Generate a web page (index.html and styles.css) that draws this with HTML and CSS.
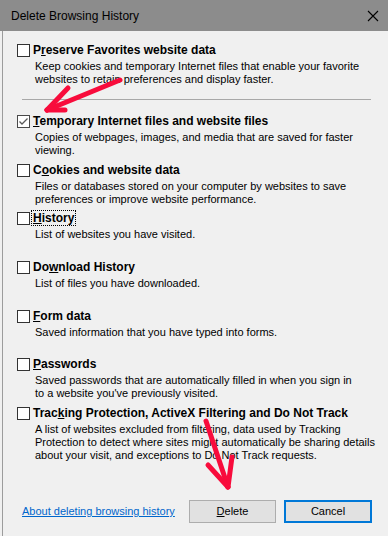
FILE: index.html
```html
<!DOCTYPE html>
<html>
<head>
<meta charset="utf-8">
<title>Delete Browsing History</title>
<link rel="stylesheet" href="styles.css">
</head>
<body>
<div class="dialog">
  <div class="titlebar">
    <span class="title">Delete Browsing History</span>
    <svg class="close" width="12" height="12" viewBox="0 0 12 12"><path d="M1 1L11 11M11 1L1 11" stroke="#000" stroke-width="1.1" fill="none"/></svg>
  </div>
  <div class="body">
    <div class="item">
      <span class="box"></span>
      <div class="label">P<u>r</u>eserve Favorites website data</div>
      <div class="desc">Keep cookies and temporary Internet files that enable your favorite<br>websites to retain preferences and display faster.</div>
    </div>
    <div class="sep"></div>
    <div class="list">
      <div class="item">
        <span class="box checked"><svg width="11" height="11" viewBox="0 0 11 11"><path d="M1.5 5.5L4 8L9.5 2.5" stroke="#5a5a5a" stroke-width="1.3" fill="none"/></svg></span>
        <div class="label"><u>T</u>emporary Internet files and website files</div>
        <div class="desc">Copies of webpages, images, and media that are saved for faster<br>viewing.</div>
      </div>
      <div class="item">
        <span class="box"></span>
        <div class="label">C<u>o</u>okies and website data</div>
        <div class="desc">Files or databases stored on your computer by websites to save<br>preferences or improve website performance.</div>
      </div>
      <div class="item">
        <span class="box"></span>
        <div class="label"><span class="focus"><u>H</u>istory</span></div>
        <div class="desc">List of websites you have visited.</div>
      </div>
      <div class="item">
        <span class="box"></span>
        <div class="label">Do<u>w</u>nload History</div>
        <div class="desc">List of files you have downloaded.</div>
      </div>
      <div class="item">
        <span class="box"></span>
        <div class="label"><u>F</u>orm data</div>
        <div class="desc">Saved information that you have typed into forms.</div>
      </div>
      <div class="item">
        <span class="box"></span>
        <div class="label"><u>P</u>asswords</div>
        <div class="desc">Saved passwords that are automatically filled in when you sign in<br>to a website you've previously visited.</div>
      </div>
      <div class="item">
        <span class="box"></span>
        <div class="label">Trac<u>k</u>ing Protection, ActiveX Filtering and Do Not Track</div>
        <div class="desc">A list of websites excluded from filtering, data used by Tracking<br>Protection to detect where sites might automatically be sharing details<br>about your visit, and exceptions to Do Not Track requests.</div>
      </div>
    </div>
    <div class="footer">
      <a class="link" href="#">About deleting browsing history</a>
      <div class="buttons">
        <button class="btn"><u>D</u>elete</button>
        <button class="btn default">Cancel</button>
      </div>
    </div>
  </div>
  <svg class="arrows" width="388" height="536" viewBox="0 0 388 536">
    <g stroke="#f80c3c" stroke-width="5" stroke-linecap="round" stroke-linejoin="round" fill="none">
      <path d="M120 80L47 110"/>
      <path d="M47 110L68 88"/>
      <path d="M47 110L65 110"/>
      <path d="M206 421L228 487"/>
      <path d="M228 487L208 465"/>
      <path d="M228 487L232 457"/>
    </g>
  </svg>
</div>
</body>
</html>
```
FILE: styles.css
```css
html, body {
  margin: 0;
  padding: 0;
  background: #f0f0f0;
}
body {
  font-family: "Liberation Sans", Arial, sans-serif;
  color: #000;
}
.dialog {
  position: relative;
  width: 388px;
  height: 536px;
  overflow: hidden;
  display: flex;
  flex-direction: column;
  background: #f0f0f0;
}
.titlebar {
  height: 31px;
  flex: none;
  background: #8c8c8c;
  display: flex;
  align-items: center;
  justify-content: space-between;
  padding: 0 9px 0 11px;
}
.title {
  font-size: 12px;
  color: #000;
}
.close {
  display: block;
}
.body {
  flex: 1;
  margin-left: 2px;
  border-left: 1px solid #9c9c9c;
  padding: 12px 16px 0 14px;
}
.item {
  display: grid;
  grid-template-columns: 13px 1fr;
  grid-template-rows: 15px auto;
  column-gap: 3px;
  align-content: start;
}
.box {
  grid-row: 1;
  grid-column: 1;
  align-self: center;
  width: 11px;
  height: 11px;
  border: 1px solid #333;
  background: #fff;
  display: flex;
}
.box.checked {
  border-color: #4a4a4a;
}
.label {
  grid-row: 1;
  grid-column: 2;
  font-size: 12px;
  font-weight: bold;
  line-height: 15px;
  white-space: nowrap;
}
.desc {
  grid-row: 2;
  grid-column: 2;
  font-size: 11px;
  line-height: 13px;
  margin-top: 2px;
  padding-left: 2px;
  white-space: nowrap;
}
.focus {
  outline: 1px dotted #000;
  padding: 0 1px;
  margin-left: -1px;
}
.sep {
  height: 1px;
  background: #a8a8a8;
  margin: 13px 1px 14px 5px;
}
.list {
  display: grid;
  grid-auto-rows: 48.67px;
}
.footer {
  margin-top: 45px;
  display: flex;
  align-items: center;
  justify-content: space-between;
  padding-left: 5px;
}
.link {
  font-size: 11px;
  color: #0066cc;
  text-decoration: underline;
}
.buttons {
  display: flex;
  gap: 8px;
}
.btn {
  font-family: "Liberation Sans", Arial, sans-serif;
  font-size: 11px;
  color: #000;
  width: 87px;
  height: 23px;
  padding: 0;
  background: #e1e1e1;
  border: 1px solid #adadad;
  border-radius: 0;
}
.btn.default {
  width: 88px;
  border: 2px solid #0078d7;
}
.arrows {
  position: absolute;
  left: 0;
  top: 0;
  pointer-events: none;
}
```
